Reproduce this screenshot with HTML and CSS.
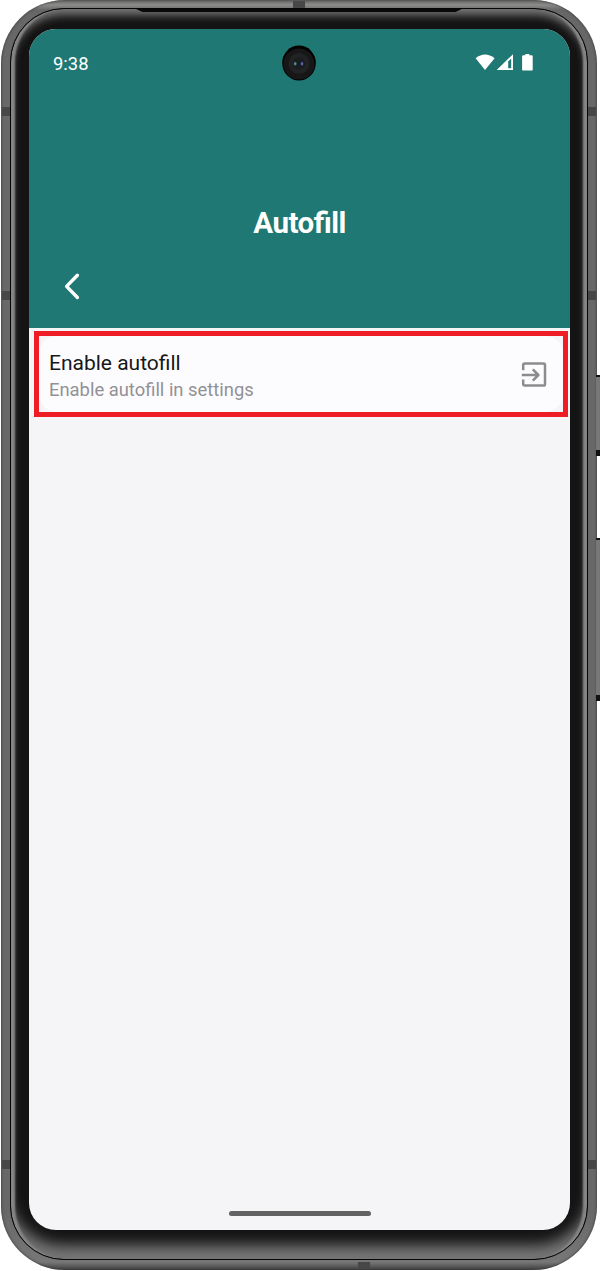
FILE: index.html
```html
<!DOCTYPE html>
<html lang="en">
<head>
<meta charset="utf-8">
<title>Autofill</title>
<link rel="stylesheet" href="styles.css">
</head>
<body>
<div class="phone">
  <i class="key power"></i><i class="key volume"></i>
  <i class="band l b1"></i><i class="band l b2"></i><i class="band l b3"></i>
  <i class="band r b1"></i><i class="band r b2"></i><i class="band r b3"></i>
  <i class="band h top"></i><i class="band h bottom"></i>
  <div class="rim">
    <i class="speaker"></i>
    <main class="screen">
      <svg class="camera" width="34" height="36" viewBox="0 0 34 36"><ellipse cx="17" cy="18" rx="16.8" ry="17.5" fill="#000"/><ellipse cx="17" cy="19" rx="15.5" ry="15.5" fill="#171717"/><circle cx="17" cy="18.5" r="10.5" fill="#202224"/><circle cx="17" cy="18.5" r="6" fill="#1a1c20"/><ellipse cx="13.2" cy="18.7" rx="1.3" ry="1.8" fill="#4f8d8e"/><ellipse cx="20" cy="18.7" rx="1.3" ry="1.8" fill="#5563b5"/></svg>
      <header class="header">
        <div class="status">
          <span>9:38</span>
          <svg width="60" height="20" viewBox="0 0 60 20" fill="#fff"><path d="M.6 5.3Q10-2.2 19.6 5.3L10 17Z"/><path fill-rule="evenodd" d="M21.7 17 38 1.2V17ZM33.2 8.2V15.3H36.2V5.7Z"/><path d="M50.3 1h4v1.2h2.2q1.2 0 1.2 1.2v13q0 1.2-1.2 1.2h-8.2q-1.2 0-1.2-1.2v-13q0-1.2 1.2-1.2h2Z"/></svg>
        </div>
        <h1>Autofill</h1>
        <svg class="back" width="20" height="30" viewBox="0 0 20 30" fill="none" stroke="#fff" stroke-width="3.4" stroke-linecap="round" stroke-linejoin="round"><path d="M15.4 4.2 4.6 15.4 15.4 26.5"/></svg>
      </header>
      <section class="focus">
        <div class="row">
          <div class="copy"><div class="name">Enable autofill</div><div class="hint">Enable autofill in settings</div></div>
          <svg class="open" width="26" height="26" viewBox="0 0 26 26" fill="none" stroke="#8c8b8f" stroke-width="2.5" stroke-linejoin="round"><path d="M2.2 8.3V3.2q0-1.6 1.6-1.6H22.4q1.6 0 1.6 1.6V22q0 1.6-1.6 1.6H3.8q-1.6 0-1.6-1.6V17.6M.8 13H17.2M11.8 7.3 17.4 13l-5.6 5.7"/></svg>
        </div>
      </section>
      <div class="home"></div>
    </main>
  </div>
</div>
</body>
</html>
```
FILE: styles.css
```css
*{box-sizing:border-box}
body{margin:0;background:#fff;font-family:Roboto,sans-serif}
.phone{position:relative;width:596px;height:1270px;margin-left:1px;padding:8px 9px 10px;border-radius:64px;background:linear-gradient(#686a68 0,#8c8c8b 5px,#676767 10px,#686868 60px,#686868 1210px,#777 1262px,#404040 1270px);box-shadow:inset 0 0 3px #333}
.rim{position:relative;height:1252px;padding:20px 18px 29px 18px;border:1px solid #050505;border-radius:54px;background:#141414;box-shadow:inset 5px 0 2px -1px #858585,inset -5px 0 2px -1px #858585,inset 0 7px 8px -1px #777,inset 0 -18px 14px -4px #767676}
.screen{position:relative;display:flex;flex-direction:column;height:1201px;width:541px;border-radius:27px;overflow:hidden;background:#f5f5f8}
.header{display:flex;flex-direction:column;height:299px;background:#1f7873;color:#fff}
.status{display:flex;justify-content:space-between;align-items:center;height:68px;padding:0 35px 0 24px;font-size:18.4px}
h1{margin:109px 0 0;text-align:center;font-size:29.5px;line-height:34px;font-weight:700;letter-spacing:-.5px;font-feature-settings:"liga" 1}
.back{margin:31px 0 0 33px}
.camera{position:absolute;left:253px;top:16px}
.focus{margin:3px 2px 0 5px;height:86px;border:5px solid #ee1c24;background:#f5f5f8}
.row{display:flex;align-items:center;justify-content:space-between;height:76px;padding:4px 16px 0 10px;border-radius:18px;background:#fcfcfe}
.name{font-size:21px;line-height:26px;color:#171719}
.hint{font-size:18.4px;line-height:27px;color:#929195}
.open{margin-top:-2px}
.home{width:142px;height:5px;margin:auto auto 14px;border-radius:3px;background:#636363}
.speaker{position:absolute;left:125px;top:0;width:326px;height:3px;background:#080808;clip-path:polygon(0 0,100% 0,98% 100%,2% 100%)}
.band{position:absolute;background:#474747}
.l,.r{width:8px;height:9px}
.l{left:1px}.r{right:1px}
.b1{top:107px}.b2{top:291px}.b3{top:1160px}
.h{width:12px;height:7px}
.top{left:292px;top:1px}.bottom{left:357px;bottom:1px}
.key{position:absolute;left:595px;width:4px;background:#777;border:solid #111;border-width:2px 0 6px}
.power{top:375px;height:81px}.volume{top:538px;height:163px}
```
